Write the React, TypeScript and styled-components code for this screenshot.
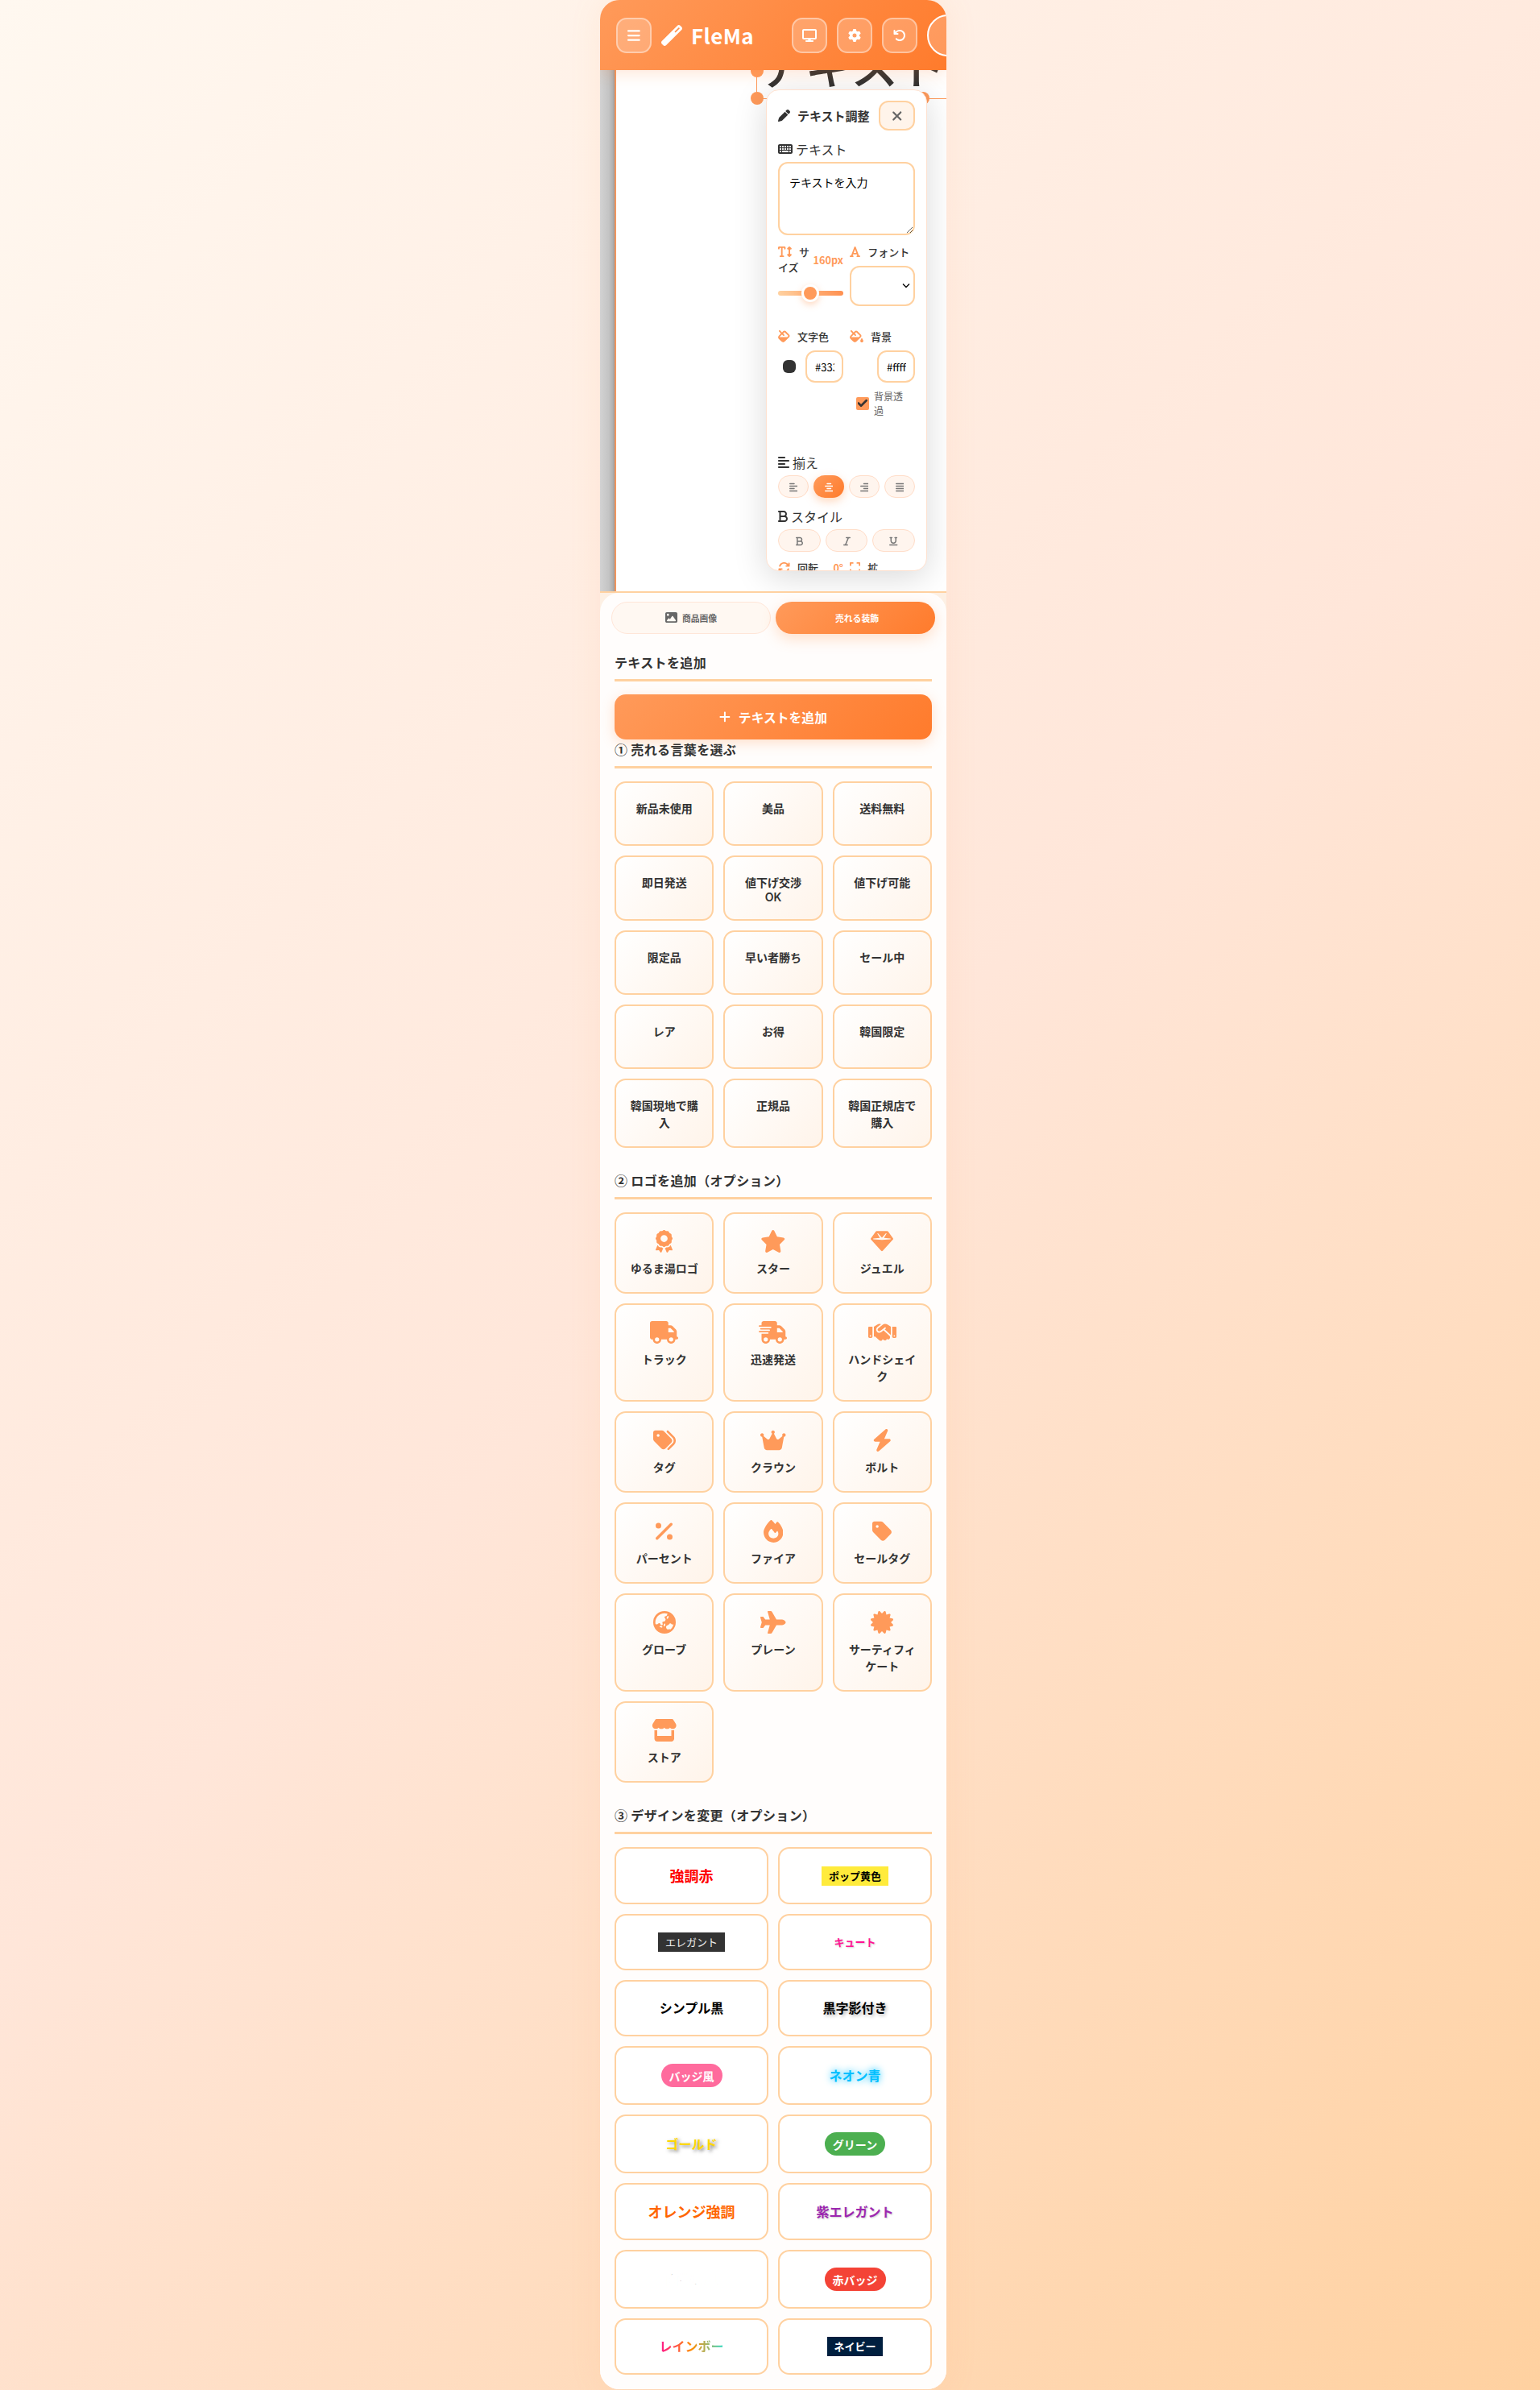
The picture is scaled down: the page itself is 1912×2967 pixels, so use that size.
import React from "react";
import styled, { createGlobalStyle, css } from "styled-components";
import {
  FaAlignCenter, FaAlignJustify, FaAlignLeft, FaAlignRight, FaArrowRotateLeft, FaArrowsRotate,
  FaAward, FaBars, FaBold, FaBolt, FaCertificate, FaCrown, FaDisplay, FaEarthAsia, FaExpand,
  FaFill, FaFillDrip, FaFire, FaFont, FaGear, FaGem, FaHandshake, FaImage, FaItalic, FaKeyboard,
  FaPen, FaPercent, FaPlane, FaPlus, FaStar, FaStore, FaTag, FaTags, FaTextHeight, FaTruck,
  FaTruckFast, FaUnderline, FaWandMagic, FaXmark, FaCheck,
} from "react-icons/fa6";

const jp = `"Noto Sans CJK JP", sans-serif`;
const ui = `Inter, "Noto Sans CJK JP", sans-serif`;
const peach = "#ffd1a0";
const orange = "#ff9a5a";
const brand = "linear-gradient(135deg, #ff9a5a 0%, #ff7b2c 100%)";

const GlobalStyle = createGlobalStyle`
  *, *::before, *::after { box-sizing: border-box; }
  body {
    margin: 0;
    height: 2967px;
    overflow: hidden;
    font-family: ${jp};
    color: #333;
    background: linear-gradient(135deg, #fff8f0 0%, #ffe6d9 50%, #ffd1a0 100%);
  }
  button, input, textarea { font-family: ${jp}; margin: 0; }
  svg { display: block; flex: none; }
  svg[viewBox="0 0 384 512"] { width: 0.75em; }
  svg[viewBox="0 0 448 512"] { width: 0.875em; }
  svg[viewBox="0 0 576 512"] { width: 1.125em; }
  svg[viewBox="0 0 640 512"] { width: 1.25em; }
`;

const Shell = styled.div`
  width: 430px;
  height: 2966px;
  margin-left: 745px;
  display: flex;
  flex-direction: column;
  border-radius: 24px;
  overflow: hidden;
  background: #fffdfc;
  box-shadow: 0 0 40px rgba(255, 154, 90, 0.1);
`;

const Header = styled.header`
  height: 87px;
  flex: none;
  display: flex;
  align-items: flex-start;
  padding: 22px 0 0 20px;
  background: ${brand};
  box-shadow: 0 4px 20px rgba(255, 123, 44, 0.2);
  position: relative;
  z-index: 2;
  color: #fff;
`;

const HeaderButton = styled.button<{ $size?: number }>`
  width: 44px;
  height: 44px;
  flex: none;
  display: grid;
  place-items: center;
  padding: 0;
  color: #fff;
  font-size: ${(p) => p.$size ?? 16}px;
  border: 2px solid rgba(255, 255, 255, 0.4);
  border-radius: 13px;
  background: rgba(255, 255, 255, 0.22);
`;

const Brand = styled.div`
  height: 44px;
  flex: none;
  display: flex;
  align-items: center;
  gap: 11px;
  margin-left: 12px;
  width: 162px;
  font-size: 26px;
`;

const BrandName = styled.span`
  font-weight: 700;
  font-size: 26px;
  line-height: 44px;
  letter-spacing: 0.4px;
`;

const HeaderTools = styled.div`
  display: flex;
  flex: none;
  gap: 12px;
`;

const Avatar = styled.div`
  width: 52px;
  height: 52px;
  flex: none;
  margin-top: -4px;
  border: 2px solid #fff;
  border-radius: 50%;
  background: rgba(255, 255, 255, 0.22);
`;

const Stage = styled.section`
  height: 647px;
  flex: none;
  position: relative;
  overflow: hidden;
  padding-left: 18px;
  background: linear-gradient(90deg, #d2d2d2 0, #c4c4c4 11px, #b0b0b0 16px, #9a9a9a 18px);
`;

const Artboard = styled.div`
  height: 100%;
  border-left: 2px solid #f0965f;
  background: #fff;
`;

const BigText = styled.div`
  position: absolute;
  left: 195px;
  top: -51px;
  font-size: 59px;
  font-weight: 500;
  line-height: 88px;
  white-space: nowrap;
  color: #333;
`;

const Selection = styled.div`
  position: absolute;
  left: 194px;
  top: 0;
  width: 400px;
  height: 36px;
  border-left: 1px solid ${orange};
  border-bottom: 1px solid ${orange};
`;

const Handle = styled.i<{ $x: number; $y: number }>`
  position: absolute;
  left: ${(p) => p.$x - 8}px;
  top: ${(p) => p.$y - 8}px;
  width: 16px;
  height: 16px;
  border-radius: 50%;
  background: ${orange};
`;

const Popover = styled.div`
  position: absolute;
  left: 206px;
  top: 24px;
  width: 200px;
  height: 598px;
  overflow: hidden;
  padding: 13px 14px;
  border: 1px solid #ffe1cf;
  border-radius: 16px;
  background: #fff;
  box-shadow: 0 8px 40px rgba(0, 0, 0, 0.15);
`;

const PopHead = styled.div`
  display: flex;
  align-items: center;
  height: 37px;
  font-size: 15px;
  font-weight: 700;
  gap: 9px;
`;

const PopTitle = styled.span`
  flex: 1;
  white-space: nowrap;
`;

const CloseButton = styled.button`
  width: 45px;
  height: 37px;
  display: grid;
  place-items: center;
  padding: 0;
  font-size: 18px;
  color: #666;
  border: 2px solid ${peach};
  border-radius: 12px;
  background: #fff4ea;
`;

const Label = styled.div<{ $top: number }>`
  display: flex;
  align-items: center;
  gap: 4px;
  height: 24px;
  margin-top: ${(p) => p.$top}px;
  font-size: 16px;
  line-height: 24px;
`;

const TextArea = styled.textarea`
  display: block;
  width: 170px;
  height: 91px;
  margin-top: 4px;
  padding: 12px;
  font-size: 14px;
  line-height: 22px;
  color: #000;
  border: 2px solid ${peach};
  border-radius: 12px;
  outline: none;
  resize: vertical;
`;

const Pair = styled.div<{ $top: number; $height?: number }>`
  display: grid;
  grid-template-columns: 81px 81px;
  gap: 8px;
  margin-top: ${(p) => p.$top}px;
  height: ${(p) => (p.$height ? p.$height + "px" : "auto")};
`;

const FieldHead = styled.div`
  display: flex;
  align-items: center;
  justify-content: space-between;
  font-size: 13px;
  line-height: 19px;
  font-weight: 500;
  color: #333;
`;

const FieldName = styled.span`
  svg {
    display: inline-block;
    vertical-align: -2px;
    font-size: 15px;
    color: ${orange};
    margin-right: 9px;
  }
`;

const Value = styled.span`
  font-size: 12.7px;
  font-weight: 600;
  color: ${orange};
`;

const Slider = styled.div`
  height: 6px;
  margin-top: 20px;
  border-radius: 3px;
  background: linear-gradient(90deg, ${peach}, #ff9050);
  display: flex;
  align-items: center;
  padding-left: 29px;
`;

const Thumb = styled.i`
  width: 22px;
  height: 22px;
  border: 3px solid #fff;
  border-radius: 50%;
  background: ${orange};
  box-shadow: 0 3px 8px rgba(255, 154, 90, 0.4);
`;

const SelectBox = styled.div`
  height: 50px;
  margin-top: 7.5px;
  display: flex;
  align-items: center;
  justify-content: flex-end;
  padding-right: 3px;
  border: 2px solid ${peach};
  border-radius: 12px;
  background: #fff;
`;

const ColorRow = styled.div`
  display: flex;
  align-items: center;
  justify-content: space-between;
  height: 40px;
  margin-top: 8px;
  padding-left: 6px;
`;

const Swatch = styled.i<{ $color: string }>`
  width: 16px;
  height: 16px;
  border-radius: 6px;
  background: ${(p) => p.$color};
`;

const HexInput = styled.input`
  width: 47px;
  height: 40px;
  padding: 1px 9px 0 10px;
  font-size: 13px;
  color: #000;
  border: 2px solid ${peach};
  border-radius: 12px;
  outline: none;
`;

const CheckLine = styled.label`
  display: flex;
  align-items: center;
  gap: 6px;
  margin-top: 8px;
  padding-left: 8px;
  font-size: 12px;
  line-height: 18px;
  color: #666;
`;

const CheckBox = styled.span`
  width: 16px;
  height: 16px;
  flex: none;
  display: grid;
  place-items: center;
  font-size: 13px;
  color: #333;
  border-radius: 2px;
  background: ${orange};
  svg { stroke: #333; stroke-width: 40; }
`;

const CheckText = styled.span`
  width: 36px;
`;

const Pills = styled.div`
  display: flex;
  gap: 6px;
  height: 28px;
  margin-top: 4px;
`;

const Pill = styled.button<{ $on?: boolean }>`
  flex: 1;
  display: grid;
  place-items: center;
  padding: 1px 0 0;
  font-size: 12px;
  color: #777;
  border: 1px solid #ffddc8;
  border-radius: 14px;
  background: #fff5ee;
  ${(p) =>
    p.$on &&
    css`
      color: #fff;
      border-color: transparent;
      background: ${brand} border-box;
      box-shadow: 0 4px 12px rgba(255, 154, 90, 0.4);
    `}
`;

const SheetWrap = styled.main`
  flex: 1;
  border-top: 2px solid ${peach};
  background: #fdf0e4;
`;

const Sheet = styled.div`
  height: 100%;
  border-radius: 24px 24px 0 0;
  background: #fffdfc;
`;

const Tabs = styled.div`
  display: flex;
  gap: 6px;
  padding: 11px 14px 0;
`;

const Tab = styled.button<{ $on?: boolean }>`
  width: 198px;
  height: 40px;
  display: flex;
  align-items: center;
  justify-content: center;
  gap: 6px;
  padding: 0 0 1px;
  font-size: 10.8px;
  font-weight: 600;
  color: #666;
  border: 1px solid #ffe6d8;
  border-radius: 20px;
  background: #fff8f2;
  svg { font-size: 15px; }
  ${(p) =>
    p.$on &&
    css`
      padding-left: 4px;
      color: #fff;
      border-color: transparent;
      background: ${brand} border-box;
      box-shadow: 0 6px 18px rgba(255, 154, 90, 0.3);
    `}
`;

const Content = styled.div`
  padding: 0 18px;
`;

const SectionTitle = styled.h3<{ $top: number }>`
  height: 35px;
  margin: ${(p) => p.$top}px 0 16px;
  border-bottom: 3px solid ${peach};
  font-size: 16px;
  line-height: 22px;
  font-weight: 700;
  letter-spacing: 0.36px;
`;

const AddButton = styled.button`
  width: 100%;
  height: 56px;
  display: flex;
  align-items: center;
  justify-content: center;
  gap: 10px;
  border: 0;
  padding: 0;
  border-radius: 14px;
  color: #fff;
  font-size: 15.8px;
  font-weight: 600;
  background: ${brand};
  box-shadow: 0 4px 16px rgba(255, 154, 90, 0.3);
`;

const CardGrid = styled.div<{ $rows: string }>`
  display: grid;
  grid-template-columns: repeat(3, 1fr);
  grid-template-rows: ${(p) => p.$rows};
  gap: 12px;
`;

const Card = styled.button<{ $tight?: boolean }>`
  display: flex;
  flex-direction: column;
  align-items: center;
  padding: 20px 16px 0;
  color: #333;
  font-family: ${ui};
  font-size: 14px;
  line-height: 21px;
  font-weight: 600;
  text-align: center;
  border: 2px solid ${peach};
  border-radius: 14px;
  background: linear-gradient(135deg, #fff 0%, #fff4ea 100%);
  svg {
    font-size: 28px;
    margin-bottom: 9px;
    color: ${orange};
  }
`;

const WordCard = styled(Card)`
  padding-top: ${(p) => (p.$tight ? 23 : 21)}px;
  line-height: ${(p) => (p.$tight ? 17.5 : 21)}px;
`;

const DesignGrid = styled.div`
  display: grid;
  grid-template-columns: 1fr 1fr;
  grid-template-rows: 71px 70px 70px 73px 73px 71px 73px 70px;
  gap: 12px;
`;

const DesignCard = styled.button`
  display: grid;
  place-items: center;
  padding: 0;
  border: 2px solid ${peach};
  border-radius: 14px;
  background: #fff;
`;

type SampleLook = {
  $size?: number;
  $weight?: number;
  $color: string;
  $bg?: string;
  $shadow?: string;
  $shape?: "box" | "pill";
  $clip?: boolean;
  $outline?: string;
};

const Sample = styled.span<SampleLook>`
  font-size: ${(p) => p.$size ?? 16}px;
  font-weight: ${(p) => p.$weight ?? 700};
  color: ${(p) => p.$color};
  background: ${(p) => p.$bg ?? "none"};
  text-shadow: ${(p) => p.$shadow ?? "none"};
  line-height: 24px;
  ${(p) => !p.$shape && (p.$size ?? 16) >= 16 && css`padding-bottom: 2px;`}
  ${(p) => p.$shape === "box" && css`padding: 0 8.7px;`}
  ${(p) => p.$shape === "pill" && css`padding: 3px 10px 2px; border-radius: 15px;`}
  ${(p) => p.$clip && css`-webkit-background-clip: text; background-clip: text;`}
  ${(p) => p.$outline && css`-webkit-text-stroke: ${p.$outline};`}
`;

const words = [
  "新品未使用", "美品", "送料無料", "即日発送", "値下げ交渉OK", "値下げ可能", "限定品", "早い者勝ち",
  "セール中", "レア", "お得", "韓国限定", "韓国現地で購入", "正規品", "韓国正規店で購入",
];

const logos: [React.ComponentType, string][] = [
  [FaAward, "ゆるま湯ロゴ"], [FaStar, "スター"], [FaGem, "ジュエル"],
  [FaTruck, "トラック"], [FaTruckFast, "迅速発送"], [FaHandshake, "ハンドシェイク"],
  [FaTags, "タグ"], [FaCrown, "クラウン"], [FaBolt, "ボルト"],
  [FaPercent, "パーセント"], [FaFire, "ファイア"], [FaTag, "セールタグ"],
  [FaEarthAsia, "グローブ"], [FaPlane, "プレーン"], [FaCertificate, "サーティフィケート"],
  [FaStore, "ストア"],
];

const designs: (SampleLook & { text: string })[] = [
  { text: "強調赤", $size: 18, $color: "#ff0000" },
  { text: "ポップ黄色", $size: 13, $color: "#000", $bg: "#ffeb3b", $shape: "box" },
  { text: "エレガント", $size: 13, $weight: 400, $color: "#eee", $bg: "#333", $shape: "box" },
  { text: "キュート", $size: 13, $color: "#ff1493", $shadow: "1px 1px 2px rgba(0,0,0,0.2)" },
  { text: "シンプル黒", $color: "#000" },
  { text: "黒字影付き", $color: "#000", $shadow: "2px 2px 4px rgba(0,0,0,0.3)" },
  { text: "バッジ風", $size: 14, $color: "#fff", $bg: "#ff6b9d", $shape: "pill" },
  { text: "ネオン青", $color: "#00bfff", $shadow: "0 0 10px #00bfff" },
  { text: "ゴールド", $color: "#ffd700", $shadow: "2px 2px 4px rgba(0,0,0,0.5)" },
  { text: "グリーン", $size: 14, $color: "#fff", $bg: "#4caf50", $shape: "pill" },
  { text: "オレンジ強調", $size: 18, $color: "#ff6600" },
  { text: "紫エレガント", $color: "#9c27b0", $shadow: "1px 1px 2px rgba(0,0,0,0.2)" },
  { text: "白抜き風", $color: "#000", $outline: "2px #fff" },
  { text: "赤バッジ", $size: 14, $color: "#fff", $bg: "#f44336", $shape: "pill" },
  {
    text: "レインボー", $color: "transparent", $clip: true,
    $bg: "linear-gradient(90deg, #ff1493, #ff8c00, #40e0d0)",
  },
  { text: "ネイビー", $size: 13, $color: "#fff", $bg: "#001f3f", $shape: "box" },
];

const aligns = [FaAlignLeft, FaAlignCenter, FaAlignRight, FaAlignJustify];
const styles = [FaBold, FaItalic, FaUnderline];

const Chevron = () => (
  <svg width="12" height="8" viewBox="0 0 12 8" fill="none" stroke="#000" strokeWidth="1.3">
    <path d="M2 1.5 6 5.5 10 1.5" />
  </svg>
);

function TextPanel() {
  return (
    <Popover>
      <PopHead>
        <FaPen />
        <PopTitle>テキスト調整</PopTitle>
        <CloseButton><FaXmark /></CloseButton>
      </PopHead>
      <Label $top={11}><FaKeyboard />テキスト</Label>
      <TextArea defaultValue="テキストを入力" />
      <Pair $top={11}>
        <div>
          <FieldHead>
            <FieldName><FaTextHeight />サイズ</FieldName>
            <Value>160px</Value>
          </FieldHead>
          <Slider><Thumb /></Slider>
        </div>
        <div>
          <FieldHead><FieldName><FaFont />フォント</FieldName></FieldHead>
          <SelectBox><Chevron /></SelectBox>
        </div>
      </Pair>
      <Pair $top={28} $height={146}>
        <div>
          <FieldHead><FieldName><FaFill />文字色</FieldName></FieldHead>
          <ColorRow><Swatch $color="#333" /><HexInput defaultValue="#333333" /></ColorRow>
        </div>
        <div>
          <FieldHead><FieldName><FaFillDrip />背景</FieldName></FieldHead>
          <ColorRow><Swatch $color="#fff" /><HexInput defaultValue="#ffffff" /></ColorRow>
          <CheckLine><CheckBox><FaCheck /></CheckBox><CheckText>背景透過</CheckText></CheckLine>
        </div>
      </Pair>
      <Label $top={8.5}><FaAlignLeft />揃え</Label>
      <Pills>
        {aligns.map((Icon, i) => <Pill key={i} $on={i === 1}><Icon /></Pill>)}
      </Pills>
      <Label $top={11}><FaBold />スタイル</Label>
      <Pills>
        {styles.map((Icon, i) => <Pill key={i}><Icon /></Pill>)}
      </Pills>
      <Pair $top={10}>
        <FieldHead><FieldName><FaArrowsRotate />回転</FieldName><Value>0°</Value></FieldHead>
        <FieldHead><FieldName><FaExpand />拡</FieldName></FieldHead>
      </Pair>
    </Popover>
  );
}

export default function App() {
  return (
    <>
      <GlobalStyle />
      <Shell>
        <Header>
          <HeaderButton $size={18}><FaBars /></HeaderButton>
          <Brand><FaWandMagic /><BrandName>FleMa</BrandName></Brand>
          <HeaderTools>
            <HeaderButton><FaDisplay /></HeaderButton>
            <HeaderButton><FaGear /></HeaderButton>
            <HeaderButton><FaArrowRotateLeft /></HeaderButton>
            <Avatar />
          </HeaderTools>
        </Header>
        <Stage>
          <Artboard />
          <BigText>テキスト</BigText>
          <Selection />
          <Handle $x={195} $y={1} />
          <Handle $x={195} $y={35} />
          <Handle $x={401} $y={35} />
          <TextPanel />
        </Stage>
        <SheetWrap>
          <Sheet>
            <Tabs>
              <Tab><FaImage />商品画像</Tab>
              <Tab $on>売れる装飾</Tab>
            </Tabs>
            <Content>
              <SectionTitle $top={24}>テキストを追加</SectionTitle>
              <AddButton><FaPlus />テキストを追加</AddButton>
              <SectionTitle $top={1}>① 売れる言葉を選ぶ</SectionTitle>
              <CardGrid $rows="80px 81px 80px 80px 86px">
                {words.map((w) => <WordCard key={w} $tight={w.endsWith("OK")}>{w}</WordCard>)}
              </CardGrid>
              <SectionTitle $top={29}>② ロゴを追加（オプション）</SectionTitle>
              <CardGrid $rows="101px 122px 101px 101px 122px 101px">
                {logos.map(([Icon, name]) => <Card key={name}><Icon />{name}</Card>)}
              </CardGrid>
              <SectionTitle $top={29}>③ デザインを変更（オプション）</SectionTitle>
              <DesignGrid>
                {designs.map(({ text, ...look }) => (
                  <DesignCard key={text}><Sample {...look}>{text}</Sample></DesignCard>
                ))}
              </DesignGrid>
            </Content>
          </Sheet>
        </SheetWrap>
      </Shell>
    </>
  );
}
